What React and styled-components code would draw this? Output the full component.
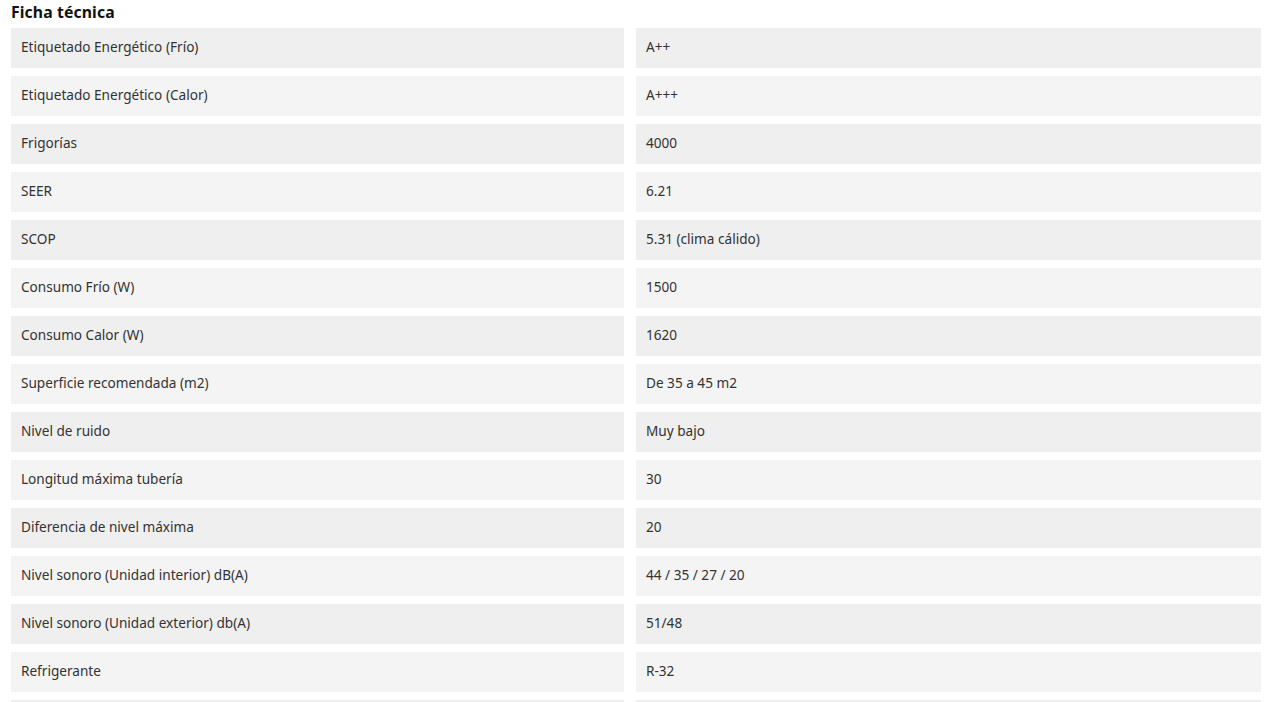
import React from "react"
import styled, { createGlobalStyle } from "styled-components"

const GlobalStyle = createGlobalStyle`
    body {
        margin: 0;
        background: #fff;
        font-family: "Noto Sans", "Open Sans", sans-serif;
        color: #333;
    }
`

const StyledFicha = styled.section`
    padding: 2px 10px 0 11px;
`

const FichaTitle = styled.h3`
    margin: 0 0 6px;
    font-size: 15.8px;
    font-weight: 700;
    line-height: 20px;
    letter-spacing: 0.1px;
    color: #111;
`

const FichaTabla = styled.div`
    display: grid;
    grid-template-columns: 613fr 625fr;
    column-gap: 12px;
    row-gap: 8px;
`

const FichaCelda = styled.div`
    height: 40px;
    display: flex;
    align-items: center;
    padding: 0 10px 3px;
    font-size: 13.6px;
    color: #333;
    background: ${props => (props.$par ? "#f4f4f4" : "#efefef")};
    box-sizing: border-box;
`

const datos = [
    ["Etiquetado Energético (Frío)", "A++"],
    ["Etiquetado Energético (Calor)", "A+++"],
    ["Frigorías", "4000"],
    ["SEER", "6.21"],
    ["SCOP", "5.31 (clima cálido)"],
    ["Consumo Frío (W)", "1500"],
    ["Consumo Calor (W)", "1620"],
    ["Superficie recomendada (m2)", "De 35 a 45 m2"],
    ["Nivel de ruido", "Muy bajo"],
    ["Longitud máxima tubería", "30"],
    ["Diferencia de nivel máxima", "20"],
    ["Nivel sonoro (Unidad interior) dB(A)", "44 / 35 / 27 / 20"],
    ["Nivel sonoro (Unidad exterior) db(A)", "51/48"],
    ["Refrigerante", "R-32"],
    ["", ""],
]

const App = () => {
    return (
        <>
            <GlobalStyle />
            <StyledFicha>
                <FichaTitle>Ficha técnica</FichaTitle>
                <FichaTabla>
                    {datos.map(([nombre, valor], i) => (
                        <React.Fragment key={i}>
                            <FichaCelda $par={i % 2 === 1}>{nombre}</FichaCelda>
                            <FichaCelda $par={i % 2 === 1}>{valor}</FichaCelda>
                        </React.Fragment>
                    ))}
                </FichaTabla>
            </StyledFicha>
        </>
    )
}

export default App
